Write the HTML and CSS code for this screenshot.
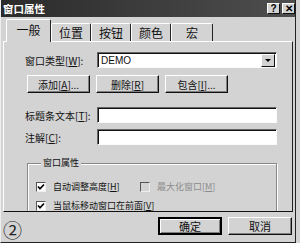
FILE: index.html
```html
<!DOCTYPE html>
<html>
<head>
  <title>窗口属性</title>
  <link rel="stylesheet" href="styles.css">
</head>
<body>
  <div class="window">
    <div class="titlebar">
      <span class="title">窗口属性</span>
      <div class="caption-buttons">
        <span class="caption-btn">?</span>
        <span class="caption-btn">✕</span>
      </div>
    </div>

    <!-- Tabs -->
    <div class="tabs">
      <div class="tab active">一般</div>
      <div class="tab">位置</div>
      <div class="tab">按钮</div>
      <div class="tab">颜色</div>
      <div class="tab last">宏</div>
    </div>

    <!-- General page -->
    <div class="panel">
      <div class="form-row">
        <label>窗口类型[<u>W</u>]:</label>
        <div class="combo">
          <span class="combo-value">DEMO</span>
          <span class="combo-arrow"><span class="triangle"></span></span>
        </div>
      </div>

      <div class="button-row">
        <button class="btn">添加[<u>A</u>]...</button>
        <button class="btn">删除[<u>R</u>]</button>
        <button class="btn">包含[<u>I</u>]...</button>
      </div>

      <div class="form-row row-title">
        <label>标题条文本[<u>T</u>]:</label>
        <div class="textbox"></div>
      </div>

      <div class="form-row row-note">
        <label>注解[<u>C</u>]:</label>
        <div class="textbox"></div>
      </div>

      <fieldset class="group">
        <legend>窗口属性</legend>
        <div class="check-row">
          <span class="check-item">
            <span class="checkbox">
              <svg width="8" height="8" viewBox="0 0 8 8"><path d="M1 3.5 L3 5.8 L7 1.5" fill="none" stroke="#000" stroke-width="1.7"/></svg>
            </span>
            <span class="check-label">自动调整高度[<u>H</u>]</span>
          </span>
          <span class="check-item disabled">
            <span class="checkbox"></span>
            <span class="check-label">最大化窗口[<u>M</u>]</span>
          </span>
        </div>
        <div class="check-row">
          <span class="check-item">
            <span class="checkbox">
              <svg width="8" height="8" viewBox="0 0 8 8"><path d="M1 3.5 L3 5.8 L7 1.5" fill="none" stroke="#000" stroke-width="1.7"/></svg>
            </span>
            <span class="check-label">当鼠标移动窗口在前面[<u>V</u>]</span>
          </span>
        </div>
      </fieldset>
    </div>

    <!-- Footer -->
    <div class="footer">
      <span class="figure-no">②</span>
      <div class="footer-buttons">
        <button class="btn btn-default">确定</button>
        <button class="btn">取消</button>
      </div>
    </div>
  </div>
</body>
</html>
```

FILE: styles.css
```css
/* Dialog styles */
body {
  margin: 0;
  padding: 0;
  background-color: #d3d3d3;
  font-family: "Noto Sans CJK SC", "Liberation Sans", sans-serif;
  font-size: 10px;
  color: #111;
}

.window {
  width: 296px;
  height: 243px;
  box-sizing: border-box;
  border-left: 1px solid #eee;
  border-right: 1px solid #222;
  border-bottom: 1px solid #222;
  background-color: #d3d3d3;
}

.titlebar {
  height: 17px;
  display: flex;
  align-items: center;
  justify-content: space-between;
  padding: 0 0 0 2px;
  background: linear-gradient(to right, #2b2b2b, #4e4e4e);
}

.title {
  color: #fff;
  font-size: 10.5px;
  font-weight: bold;
  line-height: 17px;
}

.caption-buttons {
  display: flex;
  gap: 2px;
}

.caption-btn {
  width: 13px;
  height: 11px;
  box-sizing: border-box;
  background-color: #d3d3d3;
  border: 1px solid;
  border-color: #fff #111 #111 #fff;
  font-family: "Liberation Sans", sans-serif;
  font-size: 10px;
  font-weight: bold;
  line-height: 9px;
  text-align: center;
  color: #000;
}

/* Tabs */
.tabs {
  height: 24px;
  display: flex;
  align-items: flex-end;
  padding-left: 5px;
}

.tab {
  width: 40px;
  height: 18px;
  box-sizing: border-box;
  border-top: 1px solid #fff;
  border-left: 1px solid #fff;
  border-right: 1px solid #222;
  border-radius: 2px 2px 0 0;
  font-size: 12px;
  line-height: 17px;
  text-align: center;
}

.tab.active {
  width: 45px;
  height: 23px;
  margin-bottom: -1px;
  background-color: #d3d3d3;
  position: relative;
  z-index: 1;
  line-height: 20px;
}

.tab.last {
  width: 42px;
}

/* Page */
.panel {
  width: 290px;
  height: 171px;
  margin-left: 2px;
  box-sizing: border-box;
  border-top: 1px solid #fff;
  border-left: 1px solid #fff;
  border-right: 1px solid #222;
  border-bottom: 1px solid #111;
  padding: 10px 15px 0 21px;
  overflow: hidden;
}

.form-row {
  display: grid;
  grid-template-columns: 72px 1fr;
  align-items: center;
  height: 16px;
}

.form-row label {
  white-space: nowrap;
}

.row-title {
  margin-top: 14px;
}

.row-note {
  margin-top: 6px;
}

.combo,
.textbox {
  height: 16px;
  box-sizing: border-box;
  background-color: #fff;
  border: 1px solid;
  border-color: #666 #fafafa #fafafa #666;
  box-shadow: inset 1px 1px 0 #111;
}

.combo {
  display: flex;
  align-items: center;
  justify-content: space-between;
  padding: 1px 1px 0 3px;
}

.combo-value {
  font-family: "Liberation Sans", sans-serif;
  font-size: 10px;
}

.combo-arrow {
  width: 14px;
  height: 13px;
  box-sizing: border-box;
  display: flex;
  align-items: center;
  justify-content: center;
  background-color: #d3d3d3;
  border: 1px solid;
  border-color: #fff #111 #111 #fff;
}

.triangle {
  width: 0;
  height: 0;
  border-left: 3px solid transparent;
  border-right: 3px solid transparent;
  border-top: 3px solid #000;
}

.button-row {
  display: flex;
  gap: 6px;
  margin-top: 7px;
  padding-left: 2px;
}

.btn {
  width: 63px;
  height: 18px;
  padding: 0;
  box-sizing: border-box;
  background-color: #d3d3d3;
  border: 1px solid;
  border-color: #fff #111 #111 #fff;
  box-shadow: inset -1px -1px 0 #808080;
  font-family: "Noto Sans CJK SC", "Liberation Sans", sans-serif;
  font-size: 10px;
  line-height: 15px;
  color: #111;
}

/* Group box */
.group {
  margin: 12px 0 0 2px;
  padding: 0 0 0 8px;
  min-width: 0;
  height: 80px;
  border: 1px solid #888;
  box-shadow: inset 1px 1px 0 #fff, 1px 1px 0 #fff;
}

.group legend {
  margin-left: 5px;
  padding: 0 2px;
  font-size: 9px;
  line-height: 12px;
  background-color: #d3d3d3;
}

.check-row {
  display: flex;
  align-items: center;
  height: 13px;
  margin-top: 11px;
}

.check-row + .check-row {
  margin-top: 6px;
}

.check-item {
  display: flex;
  align-items: center;
  gap: 7px;
  width: 104px;
  font-size: 9px;
  white-space: nowrap;
}

.check-item.disabled {
  color: #8c8c8c;
}

.checkbox {
  width: 10px;
  height: 10px;
  box-sizing: border-box;
  display: flex;
  align-items: center;
  justify-content: center;
  background-color: #fff;
  border: 1px solid;
  border-color: #555 #eee #eee #555;
}

.disabled .checkbox {
  background-color: #d3d3d3;
}

/* Footer */
.footer {
  height: 30px;
  display: flex;
  align-items: flex-start;
  justify-content: space-between;
  padding: 5px 3px 0 2px;
}

.figure-no {
  margin-top: 3px;
  font-size: 19px;
  line-height: 20px;
  color: #222;
}

.footer-buttons {
  display: flex;
  gap: 6px;
}

.footer-buttons .btn {
  width: 64px;
  font-size: 11px;
}

.btn-default {
  border: 2px solid #000;
  box-shadow: inset 1px 1px 0 #fff, inset -1px -1px 0 #808080;
}
```
